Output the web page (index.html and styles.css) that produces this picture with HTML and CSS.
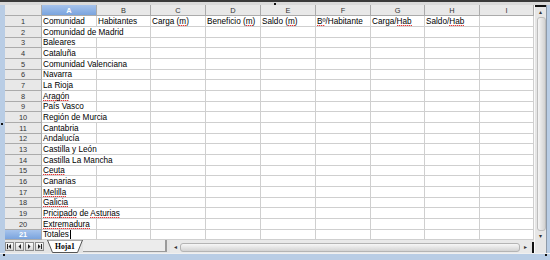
FILE: index.html
```html
<!DOCTYPE html>
<html lang="es">
<head>
<meta charset="utf-8">
<title>Hoja1</title>
<link rel="stylesheet" href="styles.css">
</head>
<body>
<div class="frame">
  <div class="topstrip"><span class="grip"></span></div>
  <div class="content">
    <div class="left">
      <table class="sheet">
        <colgroup>
          <col class="w37"><col class="w55"><col class="w54"><col class="w55"><col class="w55"><col class="w55"><col class="w55"><col class="w54"><col class="w55"><col class="w54">
        </colgroup>
        <thead>
          <tr><th class="corner"></th><th class="sel">A</th><th>B</th><th>C</th><th>D</th><th>E</th><th>F</th><th>G</th><th>H</th><th>I</th></tr>
        </thead>
        <tbody>
          <tr><th>1</th><td>Comunidad</td><td>Habitantes</td><td>Carga (<span class="sp">m</span>)</td><td>Beneficio (<span class="sp">m</span>)</td><td>Saldo (<span class="sp">m</span>)</td><td><span class="sp">Bº</span>/Habitante</td><td>Carga/<span class="sp">Hab</span></td><td>Saldo/<span class="sp">Hab</span></td><td></td></tr>
          <tr><th>2</th><td colspan="2">Comunidad de Madrid</td><td></td><td></td><td></td><td></td><td></td><td></td><td></td></tr>
          <tr><th>3</th><td>Baleares</td><td></td><td></td><td></td><td></td><td></td><td></td><td></td><td></td></tr>
          <tr><th>4</th><td>Cataluña</td><td></td><td></td><td></td><td></td><td></td><td></td><td></td><td></td></tr>
          <tr><th>5</th><td colspan="2">Comunidad Valenciana</td><td></td><td></td><td></td><td></td><td></td><td></td><td></td></tr>
          <tr><th>6</th><td>Navarra</td><td></td><td></td><td></td><td></td><td></td><td></td><td></td><td></td></tr>
          <tr><th>7</th><td>La Rioja</td><td></td><td></td><td></td><td></td><td></td><td></td><td></td><td></td></tr>
          <tr><th>8</th><td><span class="sp">Aragón</span></td><td></td><td></td><td></td><td></td><td></td><td></td><td></td><td></td></tr>
          <tr><th>9</th><td>País Vasco</td><td></td><td></td><td></td><td></td><td></td><td></td><td></td><td></td></tr>
          <tr><th>10</th><td colspan="2">Región de Murcia</td><td></td><td></td><td></td><td></td><td></td><td></td><td></td></tr>
          <tr><th>11</th><td>Cantabria</td><td></td><td></td><td></td><td></td><td></td><td></td><td></td><td></td></tr>
          <tr><th>12</th><td>Andalucía</td><td></td><td></td><td></td><td></td><td></td><td></td><td></td><td></td></tr>
          <tr><th>13</th><td colspan="2">Castilla y León</td><td></td><td></td><td></td><td></td><td></td><td></td><td></td></tr>
          <tr><th>14</th><td colspan="2">Castilla La Mancha</td><td></td><td></td><td></td><td></td><td></td><td></td><td></td></tr>
          <tr><th>15</th><td><span class="sp">Ceuta</span></td><td></td><td></td><td></td><td></td><td></td><td></td><td></td><td></td></tr>
          <tr><th>16</th><td>Canarias</td><td></td><td></td><td></td><td></td><td></td><td></td><td></td><td></td></tr>
          <tr><th>17</th><td><span class="sp">Melilla</span></td><td></td><td></td><td></td><td></td><td></td><td></td><td></td><td></td></tr>
          <tr><th>18</th><td><span class="sp">Galicia</span></td><td></td><td></td><td></td><td></td><td></td><td></td><td></td><td></td></tr>
          <tr><th>19</th><td colspan="2"><span class="sp">Pricipado</span> de <span class="sp">Asturias</span></td><td></td><td></td><td></td><td></td><td></td><td></td><td></td></tr>
          <tr><th>20</th><td><span class="sp">Extremadura</span></td><td></td><td></td><td></td><td></td><td></td><td></td><td></td><td></td></tr>
          <tr><th class="sel">21</th><td>Totales<span class="caret"></span></td><td></td><td></td><td></td><td></td><td></td><td></td><td></td><td></td></tr>
        </tbody>
      </table>
      <div class="bottombar">
        <div class="navs">
          <span class="nav"><svg width="7" height="5" viewBox="0 0 7 5"><rect x="1" y="0" width="1" height="5" fill="#222"/><polygon points="5,0 2.5,2.5 5,5" fill="#222"/></svg></span>
          <span class="nav"><svg width="7" height="5" viewBox="0 0 7 5"><polygon points="5,0 2.5,2.5 5,5" fill="#222"/></svg></span>
          <span class="nav"><svg width="7" height="5" viewBox="0 0 7 5"><polygon points="2,0 4.5,2.5 2,5" fill="#222"/></svg></span>
          <span class="nav"><svg width="7" height="5" viewBox="0 0 7 5"><polygon points="2,0 4.5,2.5 2,5" fill="#222"/><rect x="5" y="0" width="1" height="5" fill="#222"/></svg></span>
        </div>
        <div class="tab">
          <svg class="tab-shape" width="36" height="13" viewBox="0 0 36 13"><polygon points="0.5,0 5.5,12.5 30.5,12.5 35.5,0" fill="#fff" stroke="#555" stroke-width="1"/></svg>
          <span class="tab-label">Hoja1</span>
        </div>
        <div class="tabspace"></div>
        <div class="hscroll">
          <span class="hbtn">&#9666;</span>
          <span class="hthumb"></span>
          <span class="hbtn right">&#9656;</span>
        </div>
        <span class="hsplit"></span>
      </div>
    </div>
    <div class="vscroll">
      <span class="vsplit"></span>
      <span class="vbtn">&#9652;</span>
      <span class="vthumb"></span>
      <span class="vbtn">&#9662;</span>
      <span class="vcorner"></span>
    </div>
  </div>
  <div class="bottomstrip"></div>
  <span class="dot dot-left"></span>
  <span class="dot dot-bl"></span>
  <span class="dot dot-br"></span>
</div>
</body>
</html>
```

FILE: styles.css
```css
* { box-sizing: border-box; }
html, body { margin: 0; padding: 0; }
body {
  width: 550px;
  height: 260px;
  overflow: hidden;
  font-family: "Liberation Sans", Arial, sans-serif;
  background: #b8cce4;
}
.frame {
  position: relative;
  width: 550px;
  height: 260px;
  background: #b9cde5;
  border-top: 2px solid #3a3a3a;
  display: flex;
  flex-direction: column;
}
.topstrip {
  position: relative;
  height: 3px;
  flex: none;
  background: #dadada;
}
.grip {
  position: absolute;
  left: 274px;
  top: 1px;
  width: 2px;
  height: 2px;
  background: #111;
}
.content {
  display: flex;
  height: 248px;
  flex: none;
  padding: 0 3px 0 5px;
}
.left {
  width: 529px;
  display: flex;
  flex-direction: column;
  background: #fff;
}
.sheet {
  width: 529px;
  table-layout: fixed;
  border-collapse: separate;
  border-spacing: 0;
  background: #fff;
}
.w37 { width: 37px; }
.w54 { width: 54px; }
.w55 { width: 55px; }
.sheet tr { height: 11px; }
.sheet tbody tr:nth-child(3n) { height: 10px; }
.sheet td {
  padding: 0 0 0 1px;
  border-right: 1px solid #cfcfcf;
  border-bottom: 1px solid #cfcfcf;
  font-size: 8.2px;
  line-height: 9px;
  color: #000;
  white-space: nowrap;
  overflow: visible;
  vertical-align: middle;
}
.sheet th {
  padding: 0;
  border-right: 1px solid #ababab;
  border-bottom: 1px solid #ababab;
  background: #e8e8e8;
  color: #333;
  font-weight: normal;
  font-size: 7.4px;
  line-height: 9px;
  text-align: center;
  vertical-align: middle;
}
.sheet th.sel {
  background: linear-gradient(#a6c3ec, #7aa4de);
  color: #fff;
  font-weight: bold;
}
.sp {
  background-image: repeating-linear-gradient(90deg, #e23a3a 0 1px, rgba(230, 60, 60, 0.35) 1px 2px);
  background-repeat: no-repeat;
  background-position: left bottom;
  background-size: 100% 1px;
}
.caret {
  display: inline-block;
  width: 1px;
  height: 9px;
  margin-left: 1px;
  vertical-align: -2px;
  background: #000;
}
.bottombar {
  height: 13px;
  flex: none;
  display: flex;
  align-items: stretch;
  background: #e4e4e4;
}
.navs {
  display: flex;
  align-items: center;
  gap: 1px;
  width: 42px;
  padding-bottom: 1px;
}
.nav {
  width: 9px;
  height: 9px;
  border: 1px solid #8c8c8c;
  background: linear-gradient(#fbfbfb, #d6d6d6);
  display: flex;
  align-items: center;
  justify-content: center;
}
.nav svg { display: block; }
.tab {
  position: relative;
  width: 36px;
  height: 13px;
  display: flex;
  align-items: center;
  justify-content: center;
}
.tab-shape {
  position: absolute;
  left: 0;
  top: 0;
}
.tab-label {
  position: relative;
  font-family: "Liberation Serif", "Times New Roman", serif;
  font-weight: bold;
  font-size: 7.6px;
  color: #000;
  margin-top: -1px;
}
.tabspace {
  width: 84px;
  margin: 0 3px 1px 0;
  background: #ececec;
  border-bottom: 1px solid #9a9a9a;
  border-right: 2px solid #9a9a9a;
}
.hscroll {
  flex: 1;
  display: flex;
  align-items: center;
  padding: 2px 0 1px;
  background: #e9e9e9;
}
.hbtn {
  width: 10px;
  height: 10px;
  font-size: 6px;
  line-height: 10px;
  text-align: center;
  color: #333;
}
.hthumb {
  flex: 1;
  height: 9px;
  border: 1px solid #b4b4b4;
  border-radius: 3px;
  background: linear-gradient(#f7f7f7, #d3d3d3);
}
.hsplit {
  width: 2px;
  margin: 2px 0 0 2px;
  background: #111;
}
.vscroll {
  width: 13px;
  display: flex;
  flex-direction: column;
  border-left: 1px solid #fafafa;
  border-right: 1px solid #8e9aa8;
  background: #e6e6e6;
}
.vsplit {
  height: 2px;
  background: #111;
}
.vbtn {
  height: 10px;
  font-size: 6px;
  line-height: 10px;
  text-align: center;
  color: #333;
}
.vthumb {
  flex: 1;
  margin: 0 0 0 2px;
  border: 1px solid #bdbdbd;
  border-radius: 3px;
  background: linear-gradient(to right, #f6f6f6, #d2d2d2);
}
.vcorner {
  height: 12px;
}
.bottomstrip {
  flex: 1;
  border-top: 1px solid #f0f0f0;
  background: #b9cde5;
}
.dot {
  position: absolute;
  width: 2px;
  height: 2px;
  background: #111;
}
.dot-left { left: 1px; top: 121px; }
.dot-bl { left: 3px; top: 252px; }
.dot-br { left: 545px; top: 252px; }
```
